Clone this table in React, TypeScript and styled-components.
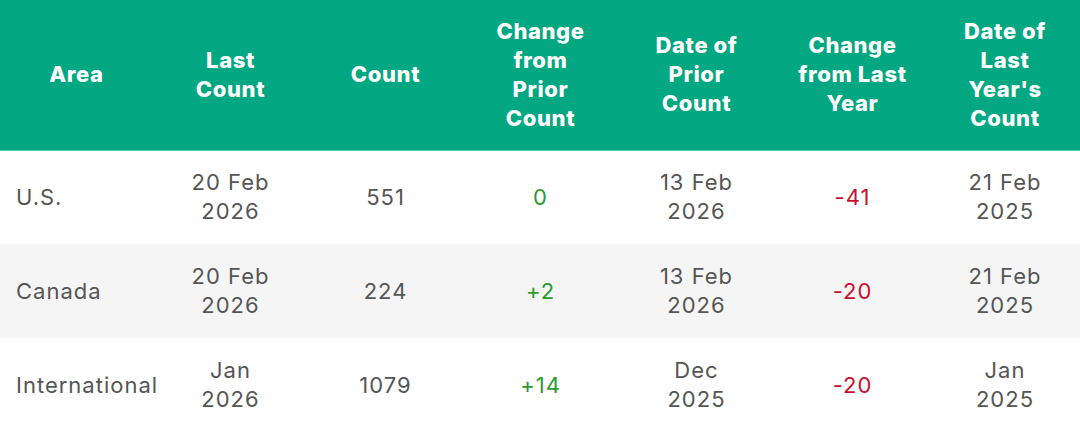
import React from "react";
import styled, { createGlobalStyle } from "styled-components";

type Tone = "up" | "down";

interface Row {
  area: string;
  last: string[];
  count: string;
  prior: { text: string; tone: Tone };
  priorDate: string[];
  year: { text: string; tone: Tone };
  yearDate: string[];
}

const GlobalStyle = createGlobalStyle`
  html, body {
    margin: 0;
    padding: 0;
    background: #fff;
  }
  body {
    font-family: Inter, "Noto Sans", "Liberation Sans", sans-serif;
  }
`;

const Table = styled.table`
  width: 1080px;
  border-collapse: collapse;
  table-layout: fixed;
`;

const HeadRow = styled.tr`
  background: #03a781;
  border-bottom: 1px solid #4fcfae;
`;

const Th = styled.th<{ $w: number }>`
  width: ${(p) => p.$w}px;
  height: 150px;
  padding: 0 8px;
  box-sizing: border-box;
  color: #fff;
  font-size: 22px;
  font-weight: 800;
  line-height: 29px;
  text-align: center;
  vertical-align: middle;
  letter-spacing: 0.6px;
`;

const BodyRow = styled.tr<{ $striped: boolean }>`
  background: ${(p) => (p.$striped ? "#f5f5f5" : "#fff")};
`;

const Td = styled.td<{ $align?: "left" | "center" }>`
  height: 94px;
  padding: 0 4px 0 ${(p) => (p.$align === "left" ? "16px" : "4px")};
  box-sizing: border-box;
  color: #555;
  font-size: 22px;
  font-weight: 400;
  line-height: 29px;
  text-align: ${(p) => p.$align ?? "center"};
  vertical-align: middle;
  letter-spacing: 1px;
  white-space: nowrap;
`;

const Delta = styled.span<{ $tone: Tone }>`
  color: ${(p) => (p.$tone === "up" ? "#2c9a2c" : "#c8102e")};
`;

const Lines = ({ parts }: { parts: string[] }) => (
  <>
    {parts.map((t, i) => (
      <React.Fragment key={i}>
        {i > 0 && <br />}
        {t}
      </React.Fragment>
    ))}
  </>
);

const columns = [
  { w: 153, label: ["Area"] },
  { w: 155, label: ["Last", "Count"] },
  { w: 155, label: ["Count"] },
  { w: 155, label: ["Change", "from", "Prior", "Count"] },
  { w: 157, label: ["Date of", "Prior", "Count"] },
  { w: 155, label: ["Change", "from Last", "Year"] },
  { w: 150, label: ["Date of", "Last", "Year's", "Count"] },
];

const rows: Row[] = [
  {
    area: "U.S.",
    last: ["20 Feb", "2026"],
    count: "551",
    prior: { text: "0", tone: "up" },
    priorDate: ["13 Feb", "2026"],
    year: { text: "-41", tone: "down" },
    yearDate: ["21 Feb", "2025"],
  },
  {
    area: "Canada",
    last: ["20 Feb", "2026"],
    count: "224",
    prior: { text: "+2", tone: "up" },
    priorDate: ["13 Feb", "2026"],
    year: { text: "-20", tone: "down" },
    yearDate: ["21 Feb", "2025"],
  },
  {
    area: "International",
    last: ["Jan", "2026"],
    count: "1079",
    prior: { text: "+14", tone: "up" },
    priorDate: ["Dec", "2025"],
    year: { text: "-20", tone: "down" },
    yearDate: ["Jan", "2025"],
  },
];

export default function App() {
  return (
    <>
      <GlobalStyle />
      <Table>
        <thead>
          <HeadRow>
            {columns.map((c) => (
              <Th key={c.label.join(" ")} $w={c.w}>
                <Lines parts={c.label} />
              </Th>
            ))}
          </HeadRow>
        </thead>
        <tbody>
          {rows.map((r, i) => (
            <BodyRow key={r.area} $striped={i % 2 === 1}>
              <Td $align="left">{r.area}</Td>
              <Td>
                <Lines parts={r.last} />
              </Td>
              <Td>{r.count}</Td>
              <Td>
                <Delta $tone={r.prior.tone}>{r.prior.text}</Delta>
              </Td>
              <Td>
                <Lines parts={r.priorDate} />
              </Td>
              <Td>
                <Delta $tone={r.year.tone}>{r.year.text}</Delta>
              </Td>
              <Td>
                <Lines parts={r.yearDate} />
              </Td>
            </BodyRow>
          ))}
        </tbody>
      </Table>
    </>
  );
}
